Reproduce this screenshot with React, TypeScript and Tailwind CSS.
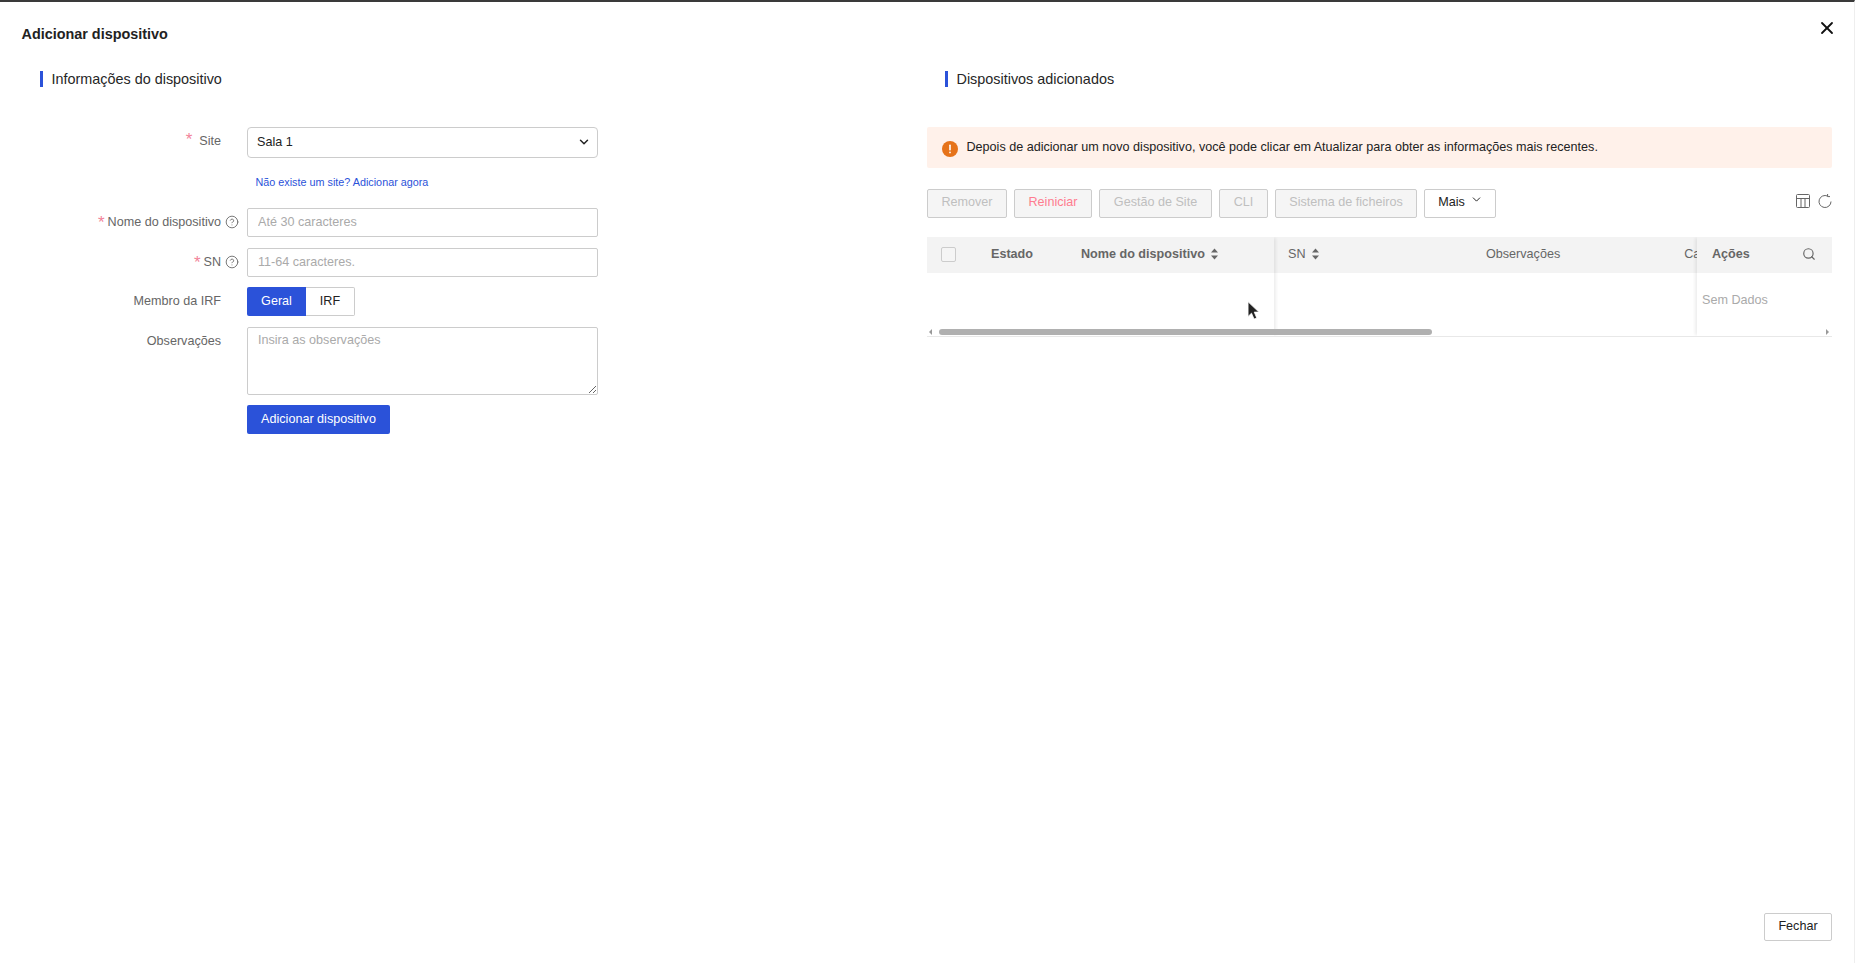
import { ChevronDown, CircleHelp, Search, X } from "lucide-react";

const font = { fontFamily: '"Liberation Sans", Arial, sans-serif' };

const SortIcon = () => (
  <svg width="7" height="12" viewBox="0 0 7 12" className="shrink-0">
    <path d="M3.5 0.5 L7 4.5 H0 Z" fill="#666" />
    <path d="M3.5 11.5 L7 7.5 H0 Z" fill="#666" />
  </svg>
);

const Heading = ({ title }: { title: string }) => (
  <div className="flex h-4 items-center border-l-[3px] border-[#2b52d9] pt-[2px] pl-[8.5px] text-[14.4px] text-[#262626]">
    {title}
  </div>
);

const FieldLabel = ({
  text,
  required,
  help,
  alignTop,
  pad = "pb-[1px]",
}: {
  text: string;
  required?: boolean;
  help?: boolean;
  alignTop?: boolean;
  pad?: string;
}) => (
  <div
    className={`flex w-[240px] shrink-0 justify-end text-[12.6px] text-[#666] ${
      help ? "pr-[1px]" : "pr-[19px]"
    } ${alignTop ? "items-start pt-[5px]" : `items-center ${pad}`}`}
  >
    {required && (
      <span className={`text-[17px] leading-none text-[#f2849a] ${help ? "mr-[3px]" : "mr-[7px] -mt-[3px]"}`}>*</span>
    )}
    <span>{text}</span>
    {help && <CircleHelp size={14} strokeWidth={1.5} className="ml-[4px] text-[#666]" />}
  </div>
);

const ToolButton = ({ label, danger, w }: { label: string; danger?: boolean; w: string }) => (
  <button
    className={`h-[29px] ${w} shrink-0 rounded-[2px] border border-[#ccc] bg-[#f5f5f5] pb-[3px] text-[12.6px] ${
      danger ? "text-[#ff7c8f]" : "text-[#bfbfbf]"
    }`}
  >
    {label}
  </button>
);

const inputClass =
  "h-[29px] w-[351px] rounded-[2px] border border-[#ccc] px-[10px] pb-[1px] text-[12.6px] outline-none placeholder:text-[#aaa]";

const App = () => {
  return (
    <div
      style={font}
      className="flex h-[963px] w-full flex-col overflow-hidden border-t-2 border-r border-t-[#3a3a3a] border-r-[#eeeeee] bg-white"
    >
      <div className="flex h-[69px] shrink-0 items-start justify-between pt-[16px] pr-[17px] pl-[21.5px]">
        <h1 className="mt-[6px] text-[14.4px] leading-5 font-bold text-[#222]">Adicionar dispositivo</h1>
        <X size={20} strokeWidth={2.2} className="text-[#111]" />
      </div>

      <div className="flex min-h-0 flex-1">
        {/* left: form */}
        <div className="w-[927px] shrink-0 pl-[40px]">
          <Heading title="Informações do dispositivo" />

          <div className="mt-[40px] -ml-[40px] flex flex-col">
            <div className="flex h-[31px] gap-[7px]">
              <FieldLabel text="Site" required pad="pb-[3px]" />
              <div className="flex w-[351px] items-center justify-between rounded-[4px] border border-[#ccc] pr-[6px] pb-[1px] pl-[9px] text-[12.6px] text-[#222]">
                <span>Sala 1</span>
                <ChevronDown size={14} strokeWidth={2.5} className="text-[#222]" />
              </div>
            </div>

            <a className="mt-[16px] ml-[255.5px] h-4 text-[10.8px] leading-4 text-[#2b52d9]">
              Não existe um site? Adicionar agora
            </a>

            <div className="mt-[18px] flex h-[29px] gap-[7px]">
              <FieldLabel text="Nome do dispositivo" required help />
              <input className={inputClass} placeholder="Até 30 caracteres" />
            </div>

            <div className="mt-[11px] flex h-[29px] gap-[7px]">
              <FieldLabel text="SN" required help />
              <input className={inputClass} placeholder="11-64 caracteres." />
            </div>

            <div className="mt-[10px] flex h-[29px] gap-[7px]">
              <FieldLabel text="Membro da IRF" />
              <div className="flex text-[12.6px]">
                <div className="flex w-[59px] items-center justify-center rounded-l-[2px] bg-[#2b52d9] pb-[1px] text-white">
                  Geral
                </div>
                <div className="flex w-[49px] items-center justify-center rounded-r-[2px] border border-l-0 border-[#ccc] pb-[1px] text-[#222]">
                  IRF
                </div>
              </div>
            </div>

            <div className="mt-[11px] flex h-[68px] gap-[7px]">
              <FieldLabel text="Observações" alignTop />
              <textarea
                className="h-[68px] w-[351px] resize-y rounded-[2px] border border-[#ccc] px-[10px] py-[3px] text-[12.6px] outline-none placeholder:text-[#aaa]"
                placeholder="Insira as observações"
              />
            </div>

            <div className="mt-[10px] flex h-[29px] pl-[247px]">
              <button className="h-[29px] w-[143px] rounded-[2px] bg-[#2b52d9] pb-[1px] text-[12.6px] text-white">
                Adicionar dispositivo
              </button>
            </div>
          </div>
        </div>

        {/* right: added devices */}
        <div className="flex min-w-0 flex-1 flex-col pr-[22px]">
          <div className="pl-[18px]">
            <Heading title="Dispositivos adicionados" />
          </div>

          <div className="mt-[40px] flex h-[41px] items-center gap-[8.5px] rounded-[2px] bg-[#fff1ea] pl-[15px] text-[12.6px] text-[#222]">
            <svg width="16" height="16" viewBox="0 0 16 16" className="mt-[2px] shrink-0">
              <circle cx="8" cy="8" r="8" fill="#e6731a" />
              <rect x="7.2" y="3.6" width="1.6" height="5.8" rx="0.6" fill="#fff" />
              <rect x="7.2" y="10.6" width="1.6" height="1.7" rx="0.6" fill="#fff" />
            </svg>
            <span className="pb-[1px]">
              Depois de adicionar um novo dispositivo, você pode clicar em Atualizar para obter as informações mais recentes.
            </span>
          </div>

          <div className="mt-[21px] flex items-start gap-[7px]">
            <ToolButton label="Remover" w="w-[80px]" />
            <ToolButton label="Reiniciar" w="w-[78px]" danger />
            <ToolButton label="Gestão de Site" w="w-[113px]" />
            <ToolButton label="CLI" w="w-[49px]" />
            <ToolButton label="Sistema de ficheiros" w="w-[142px]" />
            <button className="flex h-[29px] w-[72px] shrink-0 items-start justify-center gap-[5px] rounded-[2px] border border-[#ccc] pt-[3px] pl-[1px] text-[12.6px] text-[#222]">
              Mais
              <ChevronDown size={13} strokeWidth={1.8} />
            </button>
            <div className="ml-auto flex items-center gap-[8px] pt-[5px]">
              <svg width="14" height="14" viewBox="0 0 14 14" fill="none" stroke="#666" strokeWidth="1">
                <rect x="0.5" y="0.5" width="13" height="13" rx="1" />
                <path d="M0.5 4.5 H13.5 M5 4.5 V13.5 M9 4.5 V13.5" />
              </svg>
              <svg width="14" height="14" viewBox="0 0 14 14" fill="none" stroke="#666" strokeWidth="1" className="shrink-0">
                <path d="M13 7.5 A6 6 0 1 1 9.6 2.1" />
                <path d="M9.6 0 V2.6 H12" />
              </svg>
            </div>
          </div>

          {/* table */}
          <div className="relative mt-[19px] flex h-[100px] overflow-hidden border-b border-[#e8e8e8] text-[12.6px]">
            <div className="relative z-10 w-[347px] shrink-0 bg-white shadow-[3px_0_3px_-1px_rgba(0,0,0,0.07)]">
              <div className="flex h-[36px] items-center bg-[#f3f3f3] pb-[2px] font-bold text-[#666]">
                <span className="ml-[14px] h-[15px] w-[15px] rounded-[2px] border border-[#ccc] bg-[#f5f5f5]" />
                <span className="ml-[35px] w-[90px]">Estado</span>
                <span>Nome do dispositivo</span>
                <span className="ml-[6px]">
                  <SortIcon />
                </span>
              </div>
            </div>

            <div className="min-w-0 flex-1 overflow-hidden">
              <div className="flex h-[36px] items-center whitespace-nowrap bg-[#f3f3f3] pb-[2px] text-[#666]">
                <span className="ml-[14px]">SN</span>
                <span className="ml-[6px]">
                  <SortIcon />
                </span>
                <span className="ml-[167.5px]">Observações</span>
                <span className="ml-[124px]">Ca</span>
              </div>
            </div>

            <div className="relative z-10 w-[135px] shrink-0 bg-white shadow-[-3px_0_3px_-1px_rgba(0,0,0,0.07)]">
              <div className="flex h-[36px] items-center justify-between bg-[#f3f3f3] pr-[16px] pb-[2px] pl-[15px] font-bold text-[#666]">
                <span>Ações</span>
                <Search size={14} strokeWidth={2} className="text-[#666]" />
              </div>
              <div className="pt-[18px] pl-[5px] text-[#aaa]">Sem Dados</div>
            </div>

            {/* horizontal scrollbar */}
            <div className="absolute right-0 bottom-[1px] left-0 z-20 h-[6px]">
              <div className="absolute top-0 left-[2px] h-0 w-0 border-y-[3px] border-r-[3px] border-y-transparent border-r-[#999]" />
              <div className="absolute left-[12px] h-[6px] w-[493px] rounded-[3px] bg-[#b0b0b0]" />
              <div className="absolute top-0 right-[3px] h-0 w-0 border-y-[3px] border-l-[3px] border-y-transparent border-l-[#999]" />
            </div>

            {/* mouse pointer left in the shot */}
            <svg width="14" height="20" viewBox="0 0 13 18" className="absolute top-[64px] left-[320px] z-20">
              <path d="M1 0.5 V14 L4.2 11 L6.6 16.5 L9 15.4 L6.7 10 H11 Z" fill="#222" stroke="#fff" strokeWidth="0.7" />
            </svg>
          </div>

          <div className="mt-auto mb-[22px] flex justify-end">
            <button className="h-[28px] w-[68px] rounded-[2px] border border-[#ccc] pb-[2px] text-[12.6px] text-[#222]">
              Fechar
            </button>
          </div>
        </div>
      </div>
    </div>
  );
};

export default App;
